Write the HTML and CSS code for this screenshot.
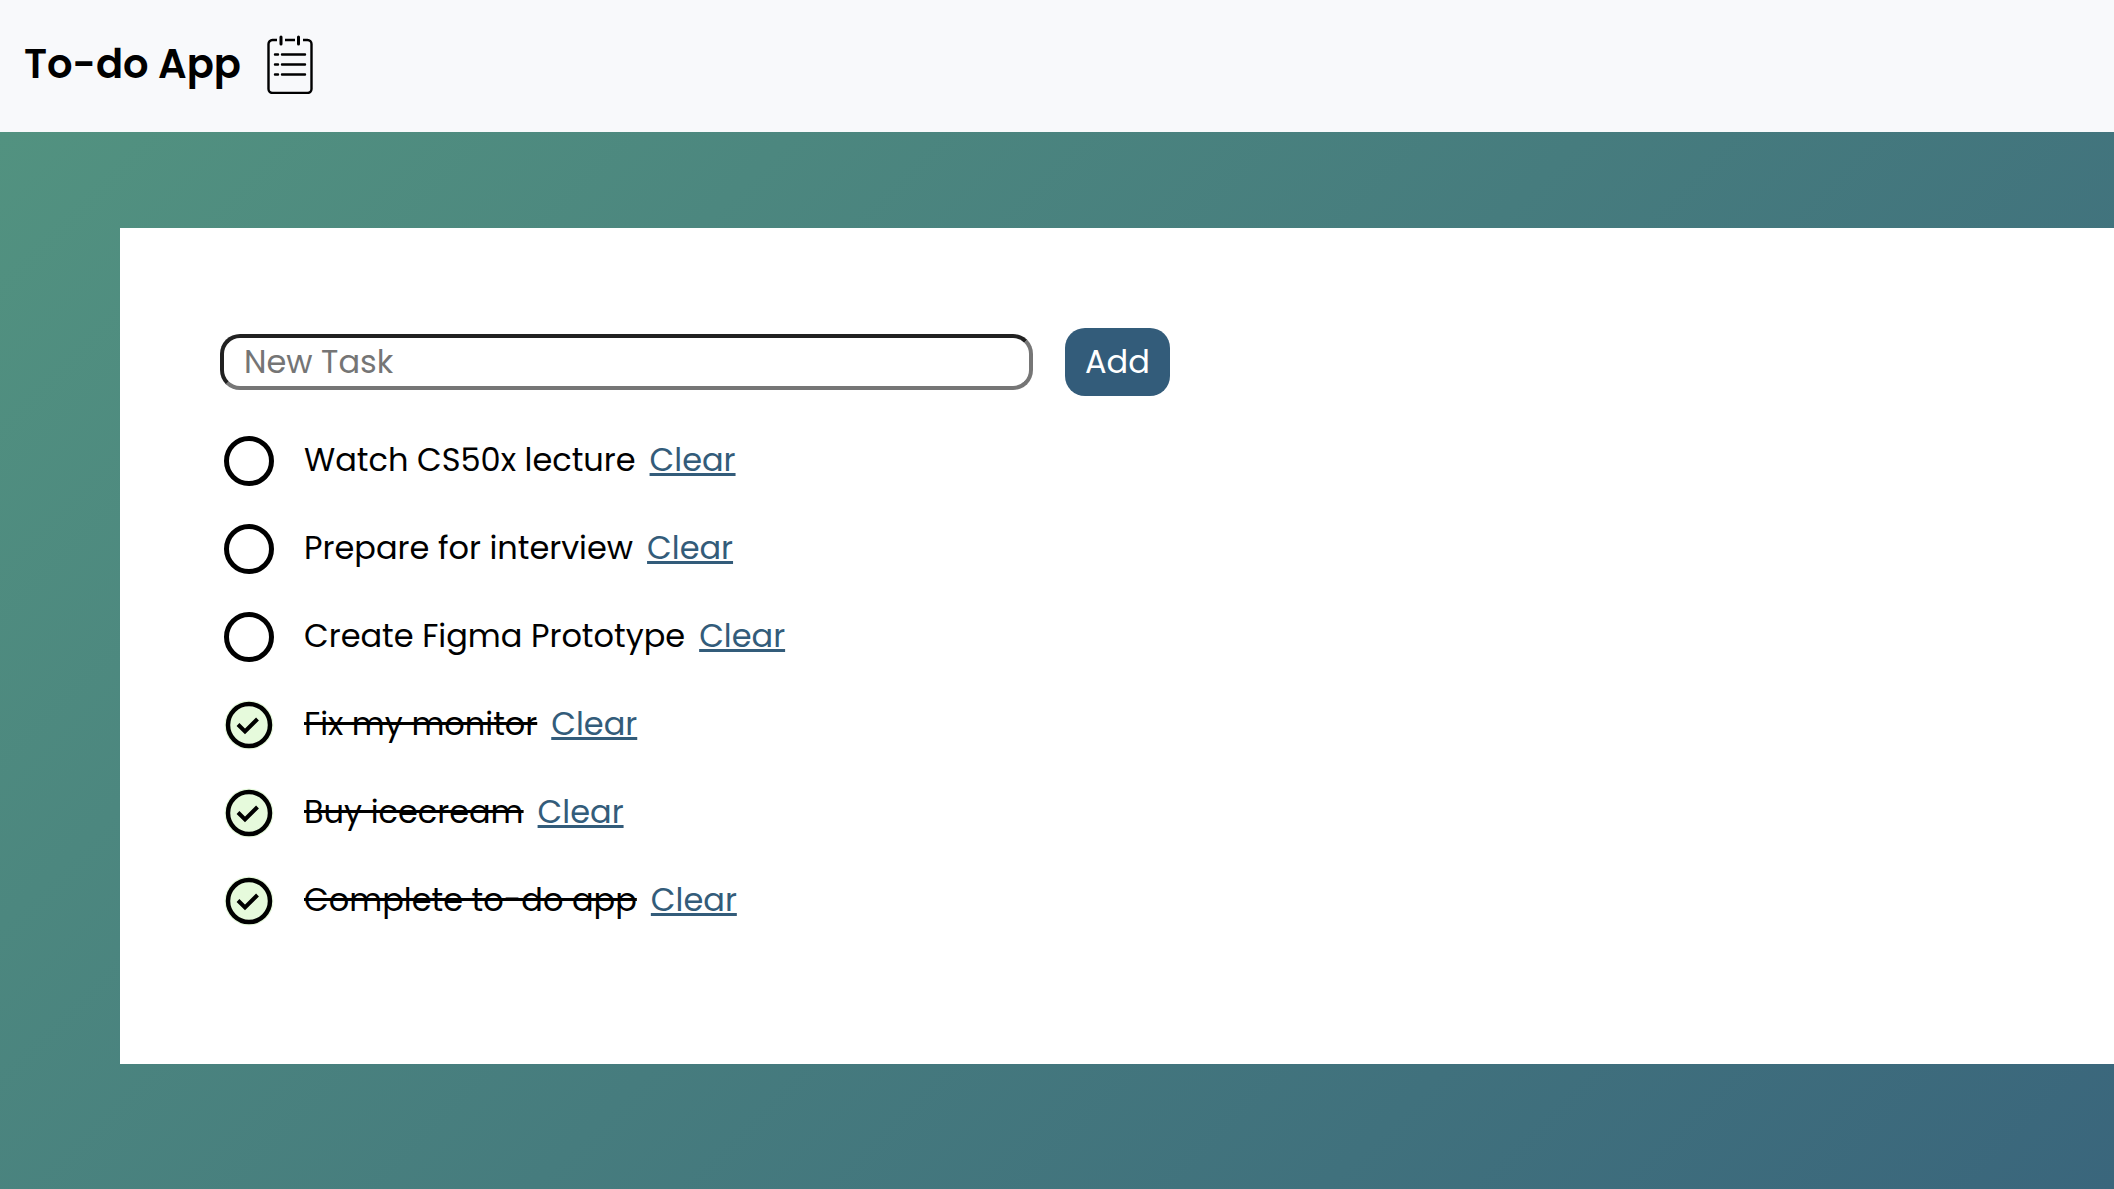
FILE: index.html
```html
<!DOCTYPE html>
<html lang="en">
<head>
<meta charset="utf-8">
<meta name="viewport" content="width=device-width, initial-scale=1">
<title>To-do App</title>
<link rel="stylesheet" href="styles.css">
</head>
<body>
<header class="navbar">
  <h1 class="brand">To-do App</h1>
  <svg class="brand-icon" viewBox="0 0 46 60" fill="none" stroke="currentColor" stroke-width="2.4" stroke-linecap="round" aria-hidden="true">
    <path stroke-linecap="butt" d="M10 6H5.500a4 4 0 0 0-4 4v45a4 4 0 0 0 4 4h35a4 4 0 0 0 4-4V10a4 4 0 0 0-4-4H36M18 6h10"/>
    <path stroke-width="3" d="M14 3v7M31.500 3v7"/>
    <path d="M8 20.500h3M15 20.500h23M8 30.500h3M15 30.500h23M8 40.500h3M15 40.500h23"/>
  </svg>
</header>
<main class="page">
  <section class="card">
    <form class="new-task">
      <input class="task-input" type="text" placeholder="New Task" aria-label="New Task">
      <button class="add-button" type="button">Add</button>
    </form>
    <ul class="tasks">
      <li class="task"><input class="tick" type="checkbox" id="t1"><label class="name" for="t1">Watch CS50x lecture</label><a class="clear" href="#">Clear</a></li>
      <li class="task"><input class="tick" type="checkbox" id="t2"><label class="name" for="t2">Prepare for interview</label><a class="clear" href="#">Clear</a></li>
      <li class="task"><input class="tick" type="checkbox" id="t3"><label class="name" for="t3">Create Figma Prototype</label><a class="clear" href="#">Clear</a></li>
      <li class="task"><input class="tick" type="checkbox" id="t4" checked><label class="name" for="t4">Fix my monitor</label><a class="clear" href="#">Clear</a></li>
      <li class="task"><input class="tick" type="checkbox" id="t5" checked><label class="name" for="t5">Buy icecream</label><a class="clear" href="#">Clear</a></li>
      <li class="task"><input class="tick" type="checkbox" id="t6" checked><label class="name" for="t6">Complete to-do app</label><a class="clear" href="#">Clear</a></li>
    </ul>
  </section>
</main>
</body>
</html>
```
FILE: styles.css
```css
* { box-sizing: border-box; }

body {
  margin: 0;
  min-height: 100vh;
  display: flex;
  flex-direction: column;
  font-family: Poppins, Inter, sans-serif;
  font-size: 32px;
  font-weight: 400;
  line-height: 48px;
  color: #000;
}

.navbar {
  display: flex;
  align-items: center;
  gap: 26px;
  height: 132px;
  padding: 0 24px 4px;
  background: #f8f9fb;
}

.brand {
  margin: 0;
  font-size: 40px;
  font-weight: 600;
  line-height: 60px;
}

.brand-icon { width: 46px; height: 60px; }

.page {
  flex: 1;
  padding: 96px 0 96px 120px;
  background: linear-gradient(135deg, #529280, #3a667c);
}

.card {
  padding: 100px 100px 98px;
  background: #fff;
}

.new-task {
  display: flex;
  align-items: center;
  gap: 32px;
}

.task-input {
  width: 813px;
  height: 56px;
  padding: 0 20px;
  border: 4px inset #767676;
  border-radius: 20px;
  background: #fff;
  font: inherit;
}

.task-input::placeholder { color: #757575; opacity: 1; }

.add-button {
  height: 68px;
  padding: 0 20px;
  border: 0;
  border-radius: 20px;
  background: #335c7a;
  color: #fff;
  font: inherit;
}

.tasks {
  display: grid;
  gap: 38px;
  margin: 0;
  padding: 40px 0;
  list-style: none;
}

.task {
  display: flex;
  align-items: flex-start;
  height: 50px;
}

.tick {
  appearance: none;
  width: 50px;
  height: 50px;
  margin: 0 30px 0 4px;
  border: 5px solid #000;
  border-radius: 50%;
}

.tick:checked {
  border: 0;
  background: url("data:image/svg+xml,%3Csvg xmlns='http://www.w3.org/2000/svg' viewBox='0 0 50 50'%3E%3Ccircle cx='25' cy='25' r='24.500' fill='%23e6fadc'/%3E%3Ccircle cx='25' cy='25' r='21' fill='none' stroke='%23000' stroke-width='4.500'/%3E%3Cpath d='M14 24.500l7 7L33.500 19' fill='none' stroke='%23000' stroke-width='4'/%3E%3C/svg%3E");
}

.tick:checked + .name { text-decoration: line-through; text-decoration-thickness: 3px; }

.clear {
  margin-left: 14px;
  color: #335c7a;
  text-decoration-thickness: 3px;
  text-underline-offset: 2px;
}
```
